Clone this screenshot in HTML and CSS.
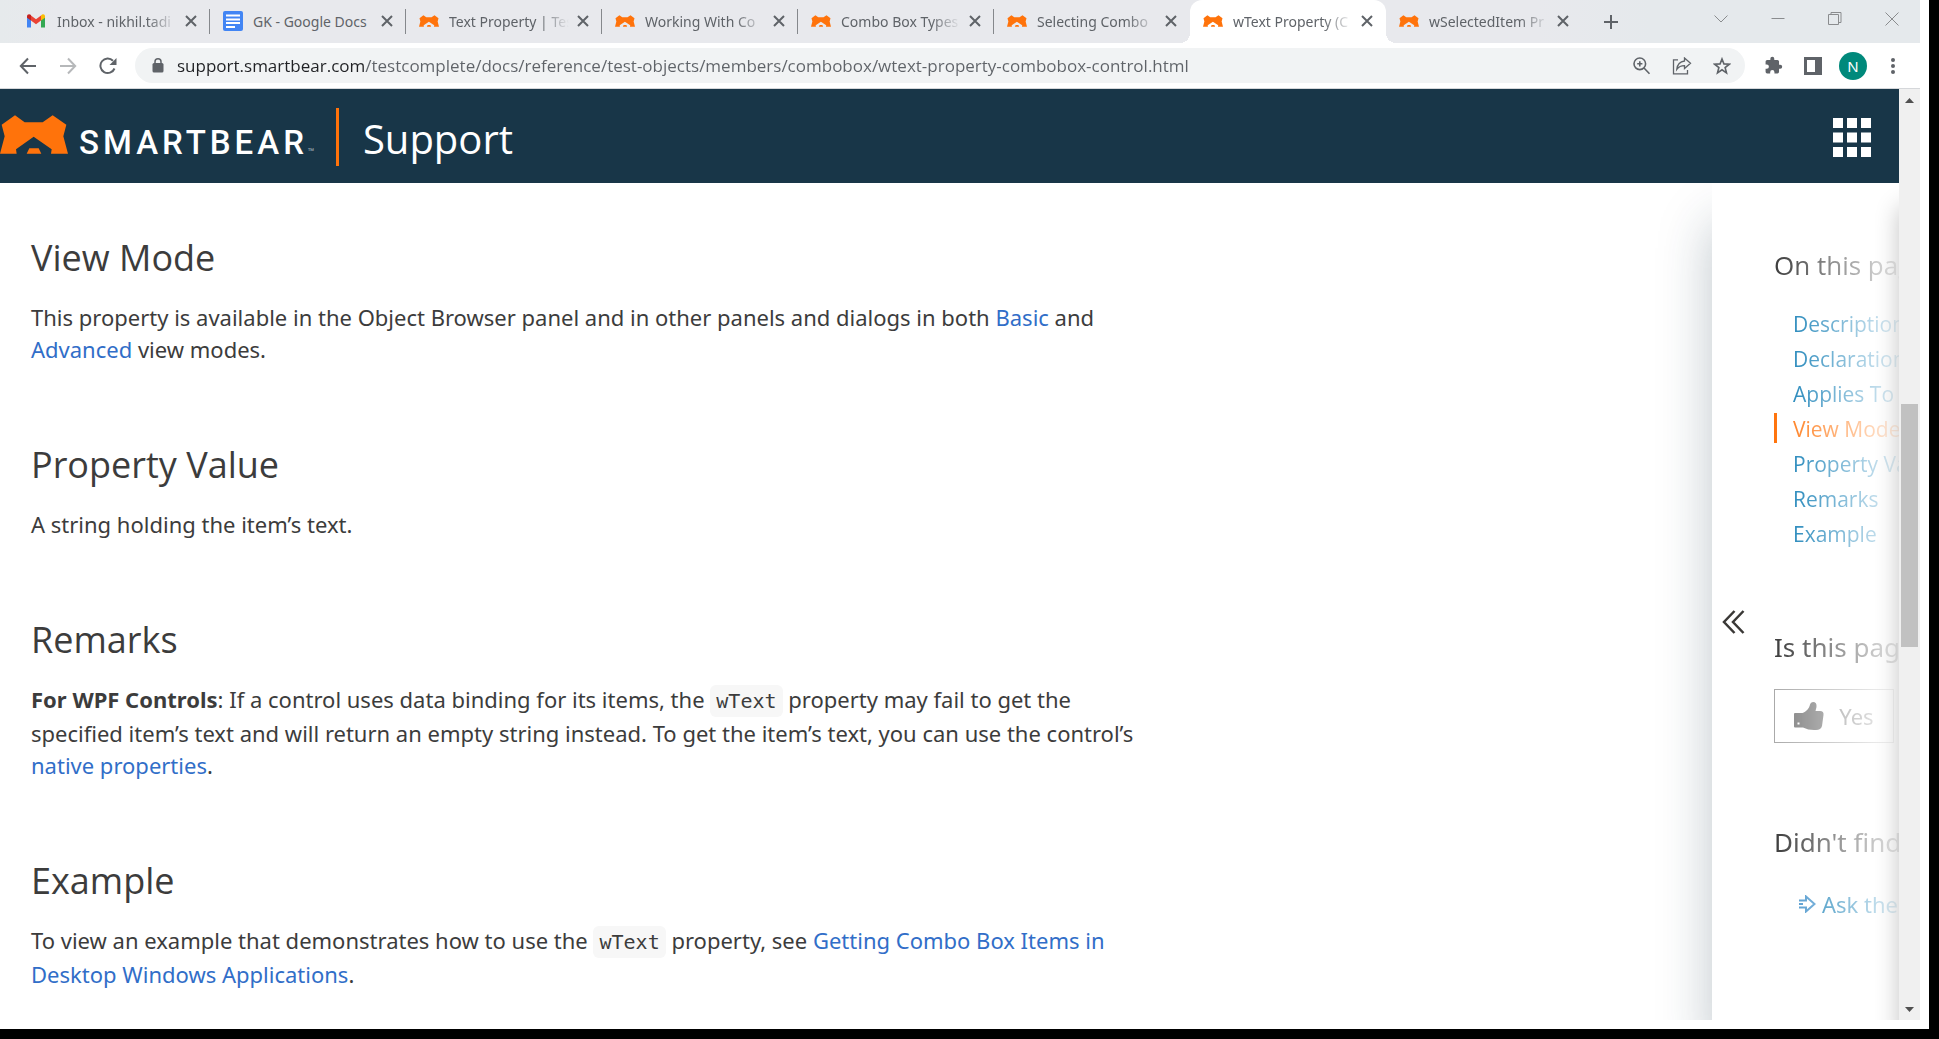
FILE: index.html
```html
<!DOCTYPE html>
<html lang="en">
<head>
<meta charset="utf-8">
<title>wText Property (ComboBox Control)</title>
<link rel="stylesheet" href="styles.css">
</head>
<body>
<svg class="defs" aria-hidden="true">
  <symbol id="bear" viewBox="0 0 204 116"><path fill="#ff730b" d="M0 116 14 63 5 29 45 0 74 21H128L158 0 199 29 190 63 204 116H153L155 102 101 65 48 102 50 116Z M88 99H116L124 116H80Z"/></symbol>
  <symbol id="close" viewBox="0 0 12 12"><path d="M1 1 11 11M11 1 1 11" stroke="#5f6368" stroke-width="2" fill="none"/></symbol>
</svg>

<nav class="tabs" aria-label="Open tabs">
  <div class="tab">
    <svg class="favicon" viewBox="0 0 20 20"><path fill="#4285f4" d="M0 5.500V16.500H4V9L2 5Z"/><path fill="#34a853" d="M14 9V16.500H18V5.500L16 5Z"/><path fill="#ea4335" d="M4 4.500 9 8.200 14 4.500V9.500L9 13.200 4 9.500Z"/><path fill="#c5221f" d="M0 5.500C0 3 2.500 2.700 4 4V9.500L0 6.800Z"/><path fill="#fbbc04" d="M14 4.500C15.500 2.700 18 3 18 5.500V6.800L14 9.500Z"/></svg>
    <span class="title">Inbox - nikhil.tadi</span>
    <button class="close" aria-label="Close tab"><svg width="12" height="12"><use href="#close"/></svg></button>
  </div>
  <div class="tab">
    <svg class="favicon" viewBox="0 0 20 20"><rect width="20" height="20" rx="2" fill="#4285f4"/><path stroke="#fff" stroke-width="2" d="M3 4.500H17M3 8.500H17M3 12H17M3 16H12"/></svg>
    <span class="title whole">GK - Google Docs</span>
    <button class="close" aria-label="Close tab"><svg width="12" height="12"><use href="#close"/></svg></button>
  </div>
  <div class="tab">
    <svg class="favicon"><use href="#bear"/></svg>
    <span class="title">Text Property | Tes</span>
    <button class="close" aria-label="Close tab"><svg width="12" height="12"><use href="#close"/></svg></button>
  </div>
  <div class="tab">
    <svg class="favicon"><use href="#bear"/></svg>
    <span class="title">Working With Co</span>
    <button class="close" aria-label="Close tab"><svg width="12" height="12"><use href="#close"/></svg></button>
  </div>
  <div class="tab">
    <svg class="favicon"><use href="#bear"/></svg>
    <span class="title">Combo Box Types</span>
    <button class="close" aria-label="Close tab"><svg width="12" height="12"><use href="#close"/></svg></button>
  </div>
  <div class="tab plain">
    <svg class="favicon"><use href="#bear"/></svg>
    <span class="title">Selecting Combo</span>
    <button class="close" aria-label="Close tab"><svg width="12" height="12"><use href="#close"/></svg></button>
  </div>
  <div class="tab plain active">
    <svg class="favicon"><use href="#bear"/></svg>
    <span class="title">wText Property (C</span>
    <button class="close" aria-label="Close tab"><svg width="12" height="12"><use href="#close"/></svg></button>
  </div>
  <div class="tab plain">
    <svg class="favicon"><use href="#bear"/></svg>
    <span class="title">wSelectedItem Pr</span>
    <button class="close" aria-label="Close tab"><svg width="12" height="12"><use href="#close"/></svg></button>
  </div>
  <button class="new-tab" aria-label="New tab"><svg width="16" height="16" viewBox="0 0 16 16"><path d="M8 1V15M1 8H15" stroke="#5f6368" stroke-width="2"/></svg></button>
  <div class="window-controls">
    <button aria-label="Search tabs"><svg width="14" height="14" viewBox="0 0 14 14"><path d="M.5 3.500 7 10 13.500 3.500"/></svg></button>
    <button aria-label="Minimize"><svg width="14" height="14" viewBox="0 0 14 14"><path d="M.5 6.500H13.500"/></svg></button>
    <button aria-label="Restore"><svg width="14" height="14" viewBox="0 0 14 14"><path d="M.5 2.500H10.500V12.500H.5ZM3 2.500V.5H13V10.500H10.500"/></svg></button>
    <button aria-label="Close window"><svg width="14" height="14" viewBox="0 0 14 14"><path d="M.5.500 13.500 13.500M13.500.500.5 13.500"/></svg></button>
  </div>
</nav>

<div class="toolbar">
  <button class="tool" aria-label="Back"><svg width="18" height="18" viewBox="0 0 18 18"><path class="line" d="M17 9H2M9 1.500 1.800 9 9 16.500"/></svg></button>
  <button class="tool" aria-label="Forward" disabled><svg width="18" height="18" viewBox="0 0 18 18"><path class="line" d="M1 9H16M9 1.500 16.200 9 9 16.500"/></svg></button>
  <button class="tool" aria-label="Reload"><svg width="18" height="18" viewBox="0 0 18 18"><path class="line" d="M15.500 11.500A7.300 7.300 0 1 1 14 3.700"/><path d="M17.500 1V8H10.500Z" fill="#5f6368"/></svg></button>
  <div class="address">
    <svg width="12" height="15" viewBox="0 0 12 15"><rect x=".5" y="5" width="11" height="9.500" rx="1.500" fill="#5f6368"/><path d="M3 6V3.800a3 3 0 0 1 6 0V6" fill="none" stroke="#5f6368" stroke-width="1.500"/></svg>
    <input type="text" aria-label="Address" value="support.smartbear.com/testcomplete/docs/reference/test-objects/members/combobox/wtext-property-combobox-control.html">
    <button class="tool" aria-label="Zoom"><svg width="18" height="18" viewBox="0 0 18 18"><path class="line thin" d="M6.800 1A5.800 5.800 0 1 0 6.800 12.600A5.800 5.800 0 1 0 6.800 1M11 11 16.500 16.800M6.800 4.200V9.400M4.200 6.800H9.400"/></svg></button>
    <button class="tool" aria-label="Share"><svg width="20" height="18" viewBox="0 0 20 18"><path class="line hair" d="M6 2.800H1.500V16.800H15.500V13M12.500 1 18.500 6.300 12.500 11.500V8.600C9 8.600 6.500 10 4.800 12.300C5.300 8 8 4.600 12.500 4Z"/></svg></button>
    <button class="tool" aria-label="Bookmark"><svg width="18" height="18" viewBox="0 0 18 18"><path class="line thin" d="M9 2 10.900 6.900 16.300 7.200 12.100 10.500 13.500 15.800 9 12.800 4.500 15.800 5.900 10.500 1.700 7.200 7.100 6.900Z"/></svg></button>
  </div>
  <button class="tool" aria-label="Extensions"><svg width="19" height="19" viewBox="0 0 24 24"><path fill="#5f6368" d="M20.500 11H19V7a2 2 0 0 0-2-2h-4V3.500a2.500 2.500 0 0 0-5 0V5H4a2 2 0 0 0-2 2v3.800h1.500a2.700 2.700 0 0 1 0 5.400H2V20a2 2 0 0 0 2 2h3.800v-1.500a2.700 2.700 0 0 1 5.400 0V22H17a2 2 0 0 0 2-2v-4h1.500a2.500 2.500 0 0 0 0-5z"/></svg></button>
  <button class="tool" aria-label="Side panel"><svg width="18" height="18" viewBox="0 0 18 18"><path fill="#5f6368" fill-rule="evenodd" d="M0 0H18V18H0ZM3 3V15H11V3Z"/></svg></button>
  <button class="tool" aria-label="Profile"><span class="avatar">N</span></button>
  <button class="tool" aria-label="Menu"><svg width="4" height="18" viewBox="0 0 4 18"><g fill="#5f6368"><circle cx="2" cy="3" r="2"/><circle cx="2" cy="9" r="2"/><circle cx="2" cy="15" r="2"/></g></svg></button>
</div>

<div class="viewport">
  <div class="page">
    <header class="site-header">
      <a class="brand" href="#"><svg width="68" height="39"><use href="#bear"/></svg><span class="wordmark">SMARTBEAR</span><span class="tm">™</span></a>
      <a class="site-name" href="#">Support</a>
      <button class="apps" aria-label="Products"><svg width="38" height="39" viewBox="0 0 38 39"><path fill="#fff" d="M0 0h10v10H0zM14 0h10v10H14zM28 0h10v10H28zM0 14.500h10v10H0zM14 14.500h10v10H14zM28 14.500h10v10H28zM0 29h10v10H0zM14 29h10v10H14zM28 29h10v10H28z"/></svg></button>
    </header>
    <div class="columns">
      <main class="article">
        <section>
          <h2>View Mode</h2>
          <p>This property is available in the Object Browser panel and in other panels and dialogs in both <a href="#">Basic</a> and <a href="#">Advanced</a> view modes.</p>
        </section>
        <section>
          <h2>Property Value</h2>
          <p>A string holding the item’s text.</p>
        </section>
        <section>
          <h2>Remarks</h2>
          <p><strong>For WPF Controls</strong>: If a control uses data binding for its items, the <code>wText</code> property may fail to get the specified item’s text and will return an empty string instead. To get the item’s text, you can use the control’s <a href="#">native properties</a>.</p>
        </section>
        <section>
          <h2>Example</h2>
          <p>To view an example that demonstrates how to use the <code>wText</code> property, see <a href="#">Getting Combo Box Items in Desktop Windows Applications</a>.</p>
        </section>
      </main>
      <aside class="panel">
        <button class="toggle" aria-label="Expand panel"><svg width="24" height="24" viewBox="0 0 24 24"><path d="M12.500 1 2 12 12.500 23M21.500 1 11 12 21.500 23" fill="none" stroke="#3a3836" stroke-width="2.500"/></svg></button>
        <div class="panel-body">
          <section class="contents">
            <h3>On this page</h3>
            <ul class="toc">
              <li><a href="#">Description</a></li>
              <li><a href="#">Declaration</a></li>
              <li><a href="#">Applies To</a></li>
              <li class="current"><a href="#">View Mode</a></li>
              <li><a href="#">Property Value</a></li>
              <li><a href="#">Remarks</a></li>
              <li><a href="#">Example</a></li>
            </ul>
          </section>
          <section class="feedback">
            <h3>Is this page</h3>
            <button class="vote"><svg width="30" height="29" viewBox="0 0 30 29"><path fill="#7d7d7d" fill-rule="evenodd" d="M0 12Q0 11 1 11H8.500C12 10 15.500 6 16 2.500Q16.500 0 19 0Q23 0 22.500 5L21.500 9H26Q30 9 29.500 13L28 24Q27 28 22 28Q15 28.500 9 25.500H1Q0 25.500 0 24.500ZM3.500 20.500V22.500H5.500V20.500Z"/></svg>Yes</button>
          </section>
          <section class="community">
            <h3>Didn't find</h3>
            <a class="ask" href="#"><svg width="18" height="18" viewBox="0 0 18 18"><path d="M1 5.500H8V1.500L16.500 9 8 16.500V12.500H1M1 9H5" fill="none" stroke="#3d8ec9" stroke-width="2"/></svg>Ask the</a>
          </section>
        </div>
      </aside>
    </div>
  </div>
  <div class="scrollbar">
    <svg width="21" height="21" viewBox="0 0 21 21"><path d="M6 14 10.500 9 15 14Z" fill="#505050"/></svg>
    <div class="track"><div class="thumb"></div></div>
    <svg width="21" height="21" viewBox="0 0 21 21"><path d="M6 8 10.500 13 15 8Z" fill="#505050"/></svg>
  </div>
</div>
</body>
</html>
```
FILE: styles.css
```css
*,
*::before,
*::after {
  box-sizing: border-box;
}

body {
  display: flex;
  flex-direction: column;
  min-height: 100vh;
  margin: 0;
  padding: 0 9px 9px 0;
  border: solid #000;
  border-width: 0 10px 10px 0;
  background: #fff;
  color: #3c3c3c;
  font-family: "Noto Sans", "Open Sans", sans-serif;
}

.defs {
  display: none;
}

svg {
  display: block;
  flex: none;
}

button {
  display: flex;
  align-items: center;
  justify-content: center;
  margin: 0;
  padding: 0;
  border: 0;
  background: none;
  color: inherit;
  font: inherit;
}

a {
  color: #316ec8;
  text-decoration: none;
}

/* Tab strip */
.tabs {
  display: flex;
  height: 43px;
  padding-left: 14px;
  background: linear-gradient(90deg, #e6eaec, #e8e9ed 3%, #e8e9ed 80%, #e5e9ec 86%);
}

.tab {
  position: relative;
  display: flex;
  flex: 0 1 196px;
  align-items: center;
  min-width: 0;
  padding: 0 9px 1px 13px;
  font-size: 14px;
  color: #5f6368;
}

.tab:not(.plain)::after {
  content: "";
  position: absolute;
  top: 9px;
  right: 0;
  width: 1px;
  height: 25px;
  background: #85888c;
}

.favicon {
  width: 20px;
  height: 20px;
  margin-right: 10px;
}

.title {
  flex: 1;
  overflow: hidden;
  white-space: nowrap;
  -webkit-mask-image: linear-gradient(90deg, #000 calc(100% - 30px), transparent);
  mask-image: linear-gradient(90deg, #000 calc(100% - 30px), transparent);
}

.title.whole {
  -webkit-mask-image: none;
  mask-image: none;
}

.close {
  width: 20px;
  height: 20px;
  margin-left: 4px;
}

.active {
  border-radius: 12px 12px 0 0;
  background: #fff;
}

.active::before,
.active::after {
  content: "";
  position: absolute;
  bottom: 0;
  width: 10px;
  height: 10px;
}

.active::before {
  right: 100%;
  background: radial-gradient(circle at 0 0, transparent 10px, #fff 10px);
}

.active.plain::after {
  left: 100%;
  background: radial-gradient(circle at 100% 0, transparent 10px, #fff 10px);
}

.new-tab {
  width: 34px;
  margin: 0 12px;
}

.window-controls {
  display: flex;
  height: 37px;
  margin-left: auto;
}

.window-controls button {
  width: 57px;
}

.window-controls path {
  fill: none;
  stroke: #8a8c8e;
}

/* Toolbar */
.toolbar {
  display: flex;
  align-items: center;
  height: 46px;
  padding: 0 7px 0 8px;
  border-bottom: 1px solid #d5d7da;
}

.tool {
  width: 40px;
  height: 35px;
  flex: none;
}

.tool:disabled {
  opacity: 0.45;
}

.line {
  fill: none;
  stroke: #5f6368;
  stroke-width: 2;
}

.line.thin {
  stroke-width: 1.6;
}

.line.hair {
  stroke-width: 1.3;
}

.address {
  display: flex;
  flex: 1;
  align-items: center;
  min-width: 0;
  height: 35px;
  margin: 0 8px 0 7px;
  padding: 0 3px 0 17px;
  border-radius: 18px;
  background: #f1f3f4;
}

.address input {
  flex: 1;
  min-width: 0;
  margin-left: 13px;
  padding: 0;
  border: 0;
  background: linear-gradient(90deg, #202124 187px, #5f6368 187px) text;
  font-family: "Open Sans", "Noto Sans", sans-serif;
  font-size: 17px;
  line-height: 24px;
  -webkit-text-fill-color: transparent;
}

.avatar {
  width: 28px;
  height: 28px;
  border-radius: 50%;
  background: #00897b;
  color: #fff;
  font-size: 15px;
  line-height: 28px;
}

/* Page and scrollbar */
.viewport {
  display: grid;
  flex: 1;
  grid-template-columns: 1fr 21px;
}

.page {
  display: flex;
  flex-direction: column;
  min-width: 0;
  overflow: hidden;
}

.scrollbar {
  display: flex;
  flex-direction: column;
  background: #f0f0f0;
}

.track {
  display: grid;
  flex: 1;
  grid-template-rows: 294fr 243fr 352fr;
  padding: 0 2px;
}

.thumb {
  grid-row: 2;
  background: #c1c1c1;
}

/* Site header */
.site-header {
  display: flex;
  flex: none;
  align-items: baseline;
  padding: 19px 28px 17px 0;
  background: #183648;
}

.brand {
  display: flex;
  align-items: baseline;
  color: #fff;
  line-height: 1;
}

.wordmark {
  margin-left: 11px;
  font-family: Roboto, sans-serif;
  font-size: 33px;
  font-weight: 500;
  letter-spacing: 4px;
}

.tm {
  width: 28px;
  color: #a3afb6;
  font-size: 8px;
}

.site-name {
  padding: 4px 0 0 24px;
  border-left: 3px solid #ff730b;
  color: #fff;
  font-family: "Open Sans", sans-serif;
  font-size: 40px;
  line-height: 54px;
}

.apps {
  align-self: center;
  margin-left: auto;
}

/* Article */
.columns {
  display: flex;
  flex: 1;
  overflow: hidden;
}

.article {
  flex: 1;
  padding: 51px 31px 24px;
}

.article section + section {
  margin-top: 76px;
}

h2,
h3,
p {
  margin: 0;
  font-weight: 400;
}

h2 {
  font-family: "Open Sans", sans-serif;
  font-size: 36px;
  line-height: 48px;
}

p {
  max-width: 1124px;
  margin-top: 19px;
  font-size: 22px;
  line-height: 32px;
}

code {
  display: inline-block;
  padding: 0 6px;
  border-radius: 6px;
  background: #f7f7f7;
  font-family: "DejaVu Sans Mono", monospace;
  font-size: 20px;
  line-height: 32px;
}

/* Collapsed side panel */
.panel {
  position: relative;
  display: flex;
  flex: none;
  width: 187px;
  background: #fff;
  box-shadow: 0 40px 50px rgba(24, 54, 72, 0.28);
}

.panel::after {
  content: "";
  position: absolute;
  top: 0;
  bottom: 0;
  left: 100%;
  width: 40px;
  box-shadow: 0 24px 24px rgba(0, 0, 0, 0.24);
}

.toggle {
  flex: none;
  align-self: center;
  width: 44px;
  height: 44px;
  margin-top: 40px;
}

.panel-body {
  flex: 1;
  min-width: 0;
  margin-left: 18px;
  padding-top: 64px;
  overflow: hidden;
  white-space: nowrap;
  -webkit-mask-image: linear-gradient(90deg, #000, rgba(0, 0, 0, 0.1));
  mask-image: linear-gradient(90deg, #000, rgba(0, 0, 0, 0.1));
}

h3 {
  margin-bottom: 24px;
  font-size: 26px;
  line-height: 36px;
}

.contents {
  font-family: "Open Sans", sans-serif;
}

.feedback {
  margin-top: 77px;
}

.community {
  margin-top: 81px;
}

.community h3 {
  margin-bottom: 28px;
}

.toc {
  margin: 0;
  padding: 0;
  list-style: none;
  font-size: 21px;
}

.toc li {
  position: relative;
  padding-left: 19px;
  line-height: 35px;
}

.toc a,
.ask {
  color: #0c7ab3;
}

.toc .current a {
  color: #ff730b;
}

.current::before {
  content: "";
  position: absolute;
  top: 1px;
  left: 0;
  width: 3px;
  height: 30px;
  background: #ff730b;
}

.vote {
  gap: 15px;
  width: 120px;
  height: 54px;
  border: 1px solid #aaa;
  color: #8e8e8e;
  font-size: 22px;
}

.ask {
  display: flex;
  gap: 6px;
  align-items: center;
  padding-left: 24px;
  font-size: 22px;
  line-height: 32px;
}
```
